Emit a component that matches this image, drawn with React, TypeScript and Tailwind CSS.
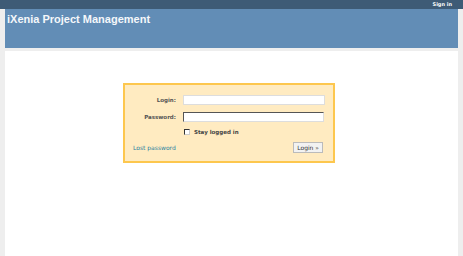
export default function App() {
  return (
    <div
      className="flex min-h-screen flex-col bg-[#eeeeee] text-[5.5px] text-[#333]"
      style={{ fontFamily: '"DejaVu Sans", Verdana, sans-serif' }}
    >
      <div className="flex h-[9px] items-center justify-end bg-[#3e5b76] pr-[11px]">
        <span className="text-[5px] font-bold text-white">Sign in</span>
      </div>
      <div className="mx-[5px] h-[39px] bg-[#628db6] pl-[2px] pt-[3px]">
        <h1
          className="m-0 text-[11px] font-bold leading-[14px] text-[#f4f7fa]"
          style={{ fontFamily: '"Liberation Sans", Arial, sans-serif' }}
        >
          iXenia Project Management
        </h1>
      </div>
      <div className="mx-[5px] mt-[3px] flex-1 bg-white pt-[32px]">
        <div className="ml-[118px] w-[212px] border-2 border-[#fdc74e] bg-[#ffebc1] pb-[8px] pl-[8px] pr-[8px] pt-[10px]">
          <div className="flex items-center">
            <label className="w-[43px] text-right font-bold text-[#555]">Login:</label>
            <input className="ml-[7px] h-[10px] w-[142px] border border-[#ddd] bg-white" />
          </div>
          <div className="mt-[7px] flex items-center">
            <label className="w-[43px] text-right font-bold text-[#555]">Password:</label>
            <input
              type="password"
              className="ml-[7px] h-[10px] w-[141px] border border-t-[#555] border-l-[#555] border-r-[#ddd] border-b-[#ddd] bg-white"
            />
          </div>
          <div className="mt-[6px] flex items-center pl-[51px]">
            <span className="h-[6px] w-[6px] border border-t-[#333] border-l-[#333] border-r-[#ccc] border-b-[#ccc] bg-white" />
            <span className="ml-[4px] font-bold text-[#444]">Stay logged in</span>
          </div>
          <div className="mt-[6px] flex items-center justify-between">
            <a className="text-[6px] text-[#2a7fa0]">Lost password</a>
            <button className="mr-[2px] h-[11px] border border-[#bbb] bg-[#f2f2f2] px-[3px] text-[6px] leading-none text-[#333]">
              Login »
            </button>
          </div>
        </div>
      </div>
    </div>
  );
}
